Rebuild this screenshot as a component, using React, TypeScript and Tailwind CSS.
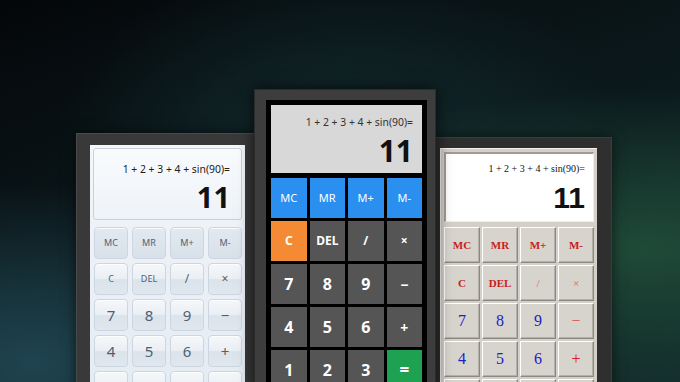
import React from "react";

const expr = "1 + 2 + 3 + 4 + sin(90)=";

const rows = [
  ["MC", "MR", "M+", "M-"],
  ["C", "DEL", "/", "×"],
  ["7", "8", "9", "−"],
  ["4", "5", "6", "+"],
  ["1", "2", "3", "="],
];

function LeftCalc() {
  return (
    <div className="mt-[133px] w-[180px] h-[260px] shrink-0 bg-[#393939] border-t border-l border-[#4a4a4a] pt-[11px] pl-[13px] pr-[11px] shadow-[0_0_12px_rgba(0,0,0,0.6)]">
      <div className="h-full bg-[linear-gradient(to_bottom,#f3f6fa,#e4ebf3)] p-[3px]">
        <div className="h-[72px] rounded-[3px] border border-[#c6d1dc] bg-[linear-gradient(to_bottom,#f9fbfd,#eef3f8)] flex flex-col items-end pr-[11px] pt-[14px] font-['Noto_Sans',sans-serif] text-[#222]">
          <div className="text-[10.4px] leading-[12px]">{expr}</div>
          <div className="mt-[8px] text-[29px] leading-[28px] font-bold text-[#111]">11</div>
        </div>
        <div className="mt-[7px] pl-[1px] grid grid-cols-4 gap-x-[4px] gap-y-[4px]">
          {rows.map((row, r) =>
            row.map((k) => (
              <div
                key={r + k}
                className={
                  "h-[32px] rounded-[4px] border border-[#cdd6e0] flex items-center justify-center font-['Noto_Sans',sans-serif] text-[#51606f] shadow-[inset_0_1px_0_rgba(255,255,255,0.8)] " +
                  (r === 0
                    ? "bg-[linear-gradient(to_bottom,#e2e9f0,#d8e0e9)] text-[9px]"
                    : "bg-[linear-gradient(to_bottom,#f5f8fb_0%,#eaeff4_48%,#dbe3eb_52%,#e0e7ee_100%)] ") +
                  (r === 1 ? (k === "/" || k === "×" ? "text-[12px]" : "text-[9px]") : r > 1 ? "text-[15px]" : "")
                }
              >
                {k}
              </div>
            ))
          )}
        </div>
      </div>
    </div>
  );
}

function MidCalc() {
  const cls = (r: number, k: string) => {
    if (r === 0) return "bg-[#2b8ff0] text-[11px] font-normal";
    if (k === "C") return "bg-[#f58a35] text-[12px] font-bold";
    if (k === "=") return "bg-[#1ea150] text-[17px] font-bold";
    if (r === 1) return "bg-[#555555] text-[12px] font-bold";
    if (k === "−" || k === "+") return "bg-[#555555] text-[14px] font-bold";
    return "bg-[#555555] text-[16px] font-bold";
  };
  return (
    <div className="relative z-10 mt-[89px] -ml-[2px] w-[182px] h-[300px] shrink-0 bg-[#3d3d3d] border-t border-l border-r border-[#2c2c2c] pt-[10px] pl-[11px] pr-[8px] shadow-[0_0_14px_rgba(0,0,0,0.7)]">
      <div className="h-full bg-black p-[5px]">
        <div className="h-[68px] bg-[#d8d8d8] flex flex-col items-end pr-[9px] pt-[11px] font-['Noto_Sans',sans-serif]">
          <div className="text-[10.4px] leading-[12px] text-[#333]">{expr}</div>
          <div className="mt-[9px] text-[30px] leading-[28px] font-bold text-[#111]">11</div>
        </div>
        <div className="mt-[5px] grid grid-cols-4 gap-[3px]">
          {rows.map((row, r) =>
            row.map((k) => (
              <div
                key={r + k}
                className={
                  "h-[40px] flex items-center justify-center text-white font-['Noto_Sans',sans-serif] " +
                  cls(r, k)
                }
              >
                {k}
              </div>
            ))
          )}
        </div>
      </div>
    </div>
  );
}

function RightCalc() {
  const col = (r: number, k: string) => {
    if (r <= 1) {
      if (k === "/" || k === "×") return "text-[#d06868] text-[11px]";
      return "text-[#c91c1c] text-[11px] font-bold";
    }
    if (k === "−") return "text-[#d65858] text-[16px]";
    if (k === "+" || k === "=") return "text-[#d42020] text-[16px]";
    return "text-[#2020c8] text-[16px]";
  };
  return (
    <div className="mt-[137px] -ml-[10px] w-[186px] h-[260px] shrink-0 bg-[#2f2f2f] border-t border-r border-[#3c3c3c] pt-[10px] pl-[14px] pr-[14px] shadow-[0_0_12px_rgba(0,0,0,0.6)]">
      <div className="h-full bg-[#d4d0c8] border-t border-l border-[#f4f2ee] p-[3px]">
        <div className="h-[70px] bg-white border-t-2 border-l-2 border-[#a09c94] border-r border-b border-r-[#efefef] border-b-[#efefef] flex flex-col items-end pr-[8px] pt-[9px]">
          <div className="text-[10px] leading-[12px] text-[#111] font-['Liberation_Serif',serif]">{expr}</div>
          <div className="mt-[9px] text-[30px] leading-[28px] font-bold text-[#111] font-['Liberation_Sans',sans-serif]">11</div>
        </div>
        <div className="mt-[5px] grid grid-cols-4 gap-[2px]">
          {rows.map((row, r) =>
            row.map((k) => (
              <div
                key={r + k}
                className={
                  "h-[36px] bg-[#d7d3cd] border border-t-white border-l-white border-r-[#8c8984] border-b-[#8c8984] shadow-[inset_-1px_-1px_0_#b4b0a9] flex items-center justify-center font-['Liberation_Serif',serif] " +
                  col(r, k)
                }
              >
                {k}
              </div>
            ))
          )}
        </div>
      </div>
    </div>
  );
}

export default function App() {
  return (
    <div className="w-[680px] h-[382px] overflow-hidden flex items-start pl-[76px] bg-[radial-gradient(ellipse_at_5%_95%,#1f4450_0%,rgba(31,68,80,0)_35%),radial-gradient(ellipse_at_95%_65%,#1f4a38_0%,rgba(31,74,56,0)_45%),radial-gradient(ellipse_at_50%_40%,#132b2e_0%,rgba(19,43,46,0)_60%),linear-gradient(160deg,#04070a_0%,#0a1518_40%,#122a2b_100%)]">
      <LeftCalc />
      <MidCalc />
      <RightCalc />
    </div>
  );
}
